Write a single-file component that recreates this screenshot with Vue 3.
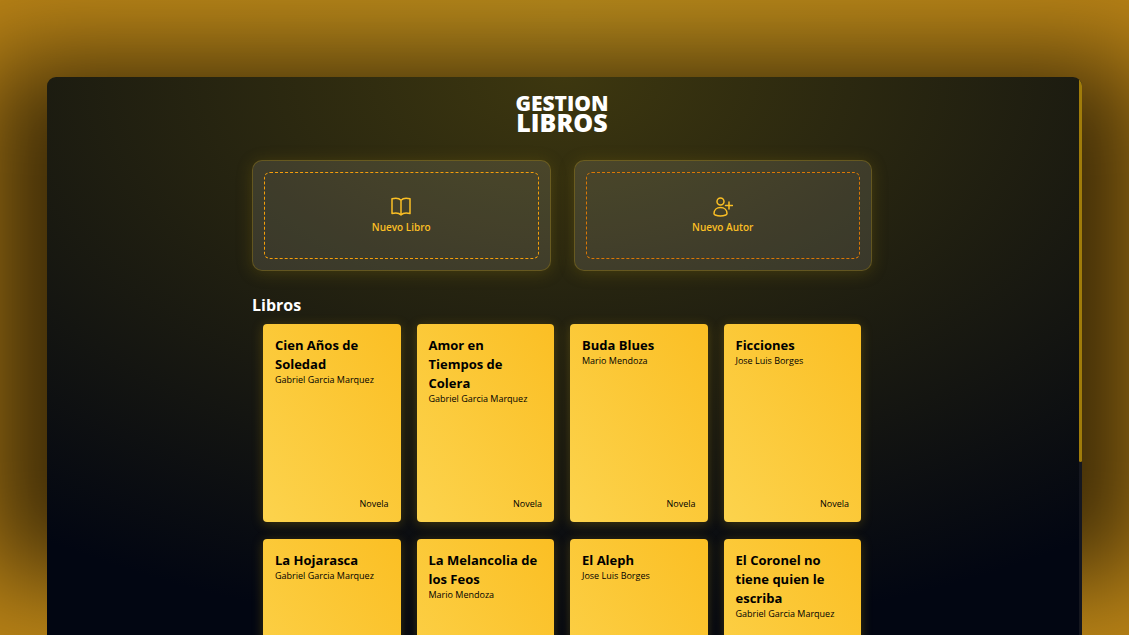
<script setup>
const books = [
  { title: 'Cien Años de Soledad', author: 'Gabriel Garcia Marquez', genre: 'Novela' },
  { title: 'Amor en Tiempos de Colera', author: 'Gabriel Garcia Marquez', genre: 'Novela' },
  { title: 'Buda Blues', author: 'Mario Mendoza', genre: 'Novela' },
  { title: 'Ficciones', author: 'Jose Luis Borges', genre: 'Novela' },
  { title: 'La Hojarasca', author: 'Gabriel Garcia Marquez', genre: '' },
  { title: 'La Melancolia de los Feos', author: 'Mario Mendoza', genre: '' },
  { title: 'El Aleph', author: 'Jose Luis Borges', genre: '' },
  { title: 'El Coronel no tiene quien le escriba', author: 'Gabriel Garcia Marquez', genre: '' },
]
</script>

<template>
  <div class="backdrop">
    <div class="window">
      <main class="content">
        <h1 class="brand">
          <span class="brand-top">GESTION</span>
          <span class="brand-bottom">LIBROS</span>
        </h1>

        <div class="actions">
          <div class="action-card">
            <button type="button" class="action amber">
              <svg class="icon" viewBox="0 0 20 20" aria-hidden="true">
                <path d="M10 3.2C8.5 1.6 4.5 1 1 1.8V16.5C4.5 15.7 8.5 16.3 10 18C11.5 16.3 15.5 15.7 19 16.5V1.8C15.5 1 11.5 1.6 10 3.2V18" />
              </svg>
              <span>Nuevo Libro</span>
            </button>
          </div>
          <div class="action-card">
            <button type="button" class="action orange">
              <svg class="icon" viewBox="0 0 20 20" aria-hidden="true">
                <circle cx="7.5" cy="4.5" r="3.5" />
                <path d="M7.5 10.5C3.5 10.5 1 13.2 1 16.5C1 17.3 1.4 17.7 2.2 18C5.5 19.2 9.5 19.2 12.8 18C13.6 17.7 14 17.3 14 16.5C14 13.2 11.5 10.5 7.5 10.5ZM16 5V12M12.5 8.5H19.5" />
              </svg>
              <span>Nuevo Autor</span>
            </button>
          </div>
        </div>

        <h2 class="heading">Libros</h2>
        <div class="books">
          <article v-for="book in books" :key="book.title" class="book">
            <h3 class="title">{{ book.title }}</h3>
            <p class="author">{{ book.author }}</p>
            <p v-if="book.genre" class="genre">{{ book.genre }}</p>
          </article>
        </div>
      </main>
      <div class="scroll-track"><div class="scroll-thumb"></div></div>
    </div>
  </div>
</template>

<style>
body {
  margin: 0;
}
</style>

<style scoped>
.backdrop {
  position: relative;
  box-sizing: border-box;
  height: 100vh;
  overflow: hidden;
  padding: 77px 47px 0;
  background: linear-gradient(to right, #b88216, #b88a1c 50%, #b88216);
  font-family: "Segoe UI", "Open Sans", "Noto Sans", sans-serif;
}

.backdrop::before {
  content: "";
  position: absolute;
  inset: 60px -10px 60px;
  background: rgba(0, 0, 0, 0.68);
  filter: blur(50px);
}

.window {
  position: relative;
  box-sizing: border-box;
  height: 100%;
  overflow: hidden;
  padding-right: 5px;
  border-radius: 9px 9px 0 0;
  background: radial-gradient(ellipse 90% 100% at 50% 0, #3d370f, #020612);
}

.content {
  max-width: 620px;
  margin: 0 auto;
  padding-top: 17px;
}

.brand {
  display: flex;
  flex-direction: column;
  align-items: center;
  margin: 0 0 28px;
  color: #fff;
  font-weight: 800;
}

.brand-top {
  font-size: 21px;
  line-height: 19px;
}

.brand-bottom {
  font-size: 25px;
  line-height: 19px;
}

.actions {
  display: grid;
  grid-template-columns: 1fr 1fr;
  gap: 23px;
}

.action-card {
  padding: 11px;
  border: 1px solid rgba(161, 129, 20, 0.4);
  border-radius: 10px;
  background: rgba(255, 255, 255, 0.11);
  box-shadow: 0 2px 16px rgba(161, 130, 10, 0.25);
}

.action {
  display: flex;
  flex-direction: column;
  align-items: center;
  justify-content: center;
  gap: 3px;
  width: 100%;
  height: 87px;
  border: 1px dashed #f59e0b;
  border-radius: 6px;
  background: transparent;
  color: #fbbf24;
  font: 600 10px/14px "Segoe UI", "Open Sans", "Noto Sans", sans-serif;
}

.orange {
  border-color: #d97706;
}

.icon {
  width: 20px;
  height: 20px;
  fill: none;
  stroke: currentColor;
  stroke-width: 1.5;
  stroke-linejoin: round;
  stroke-linecap: round;
}

.heading {
  margin: 22px 0 6px;
  color: #fff;
  font-size: 16px;
  line-height: 25px;
  font-weight: 700;
}

.books {
  display: grid;
  grid-template-columns: repeat(4, 1fr);
  gap: 17px 16px;
  padding: 0 11px;
}

.book {
  display: flex;
  flex-direction: column;
  box-sizing: border-box;
  height: 198px;
  padding: 12px;
  border-radius: 4px;
  background: linear-gradient(to top right, #fcd34d, #fbbf24);
  box-shadow: 0 2px 12px rgba(190, 150, 10, 0.3);
  color: #000;
}

.title {
  margin: 0 2px 0 0;
  font-size: 13px;
  line-height: 19px;
  font-weight: 700;
}

.author {
  margin: 0;
  font-size: 9px;
  line-height: 12px;
  font-weight: 500;
}

.genre {
  margin: auto 0 0;
  text-align: right;
  font-size: 9px;
  line-height: 12px;
  font-weight: 400;
}

.scroll-track {
  position: absolute;
  top: 0;
  right: 0;
  bottom: 0;
  width: 3px;
  background: #15171f;
}

.scroll-thumb {
  height: 69%;
  border-radius: 2px;
  background: #a07c0a;
}
</style>
